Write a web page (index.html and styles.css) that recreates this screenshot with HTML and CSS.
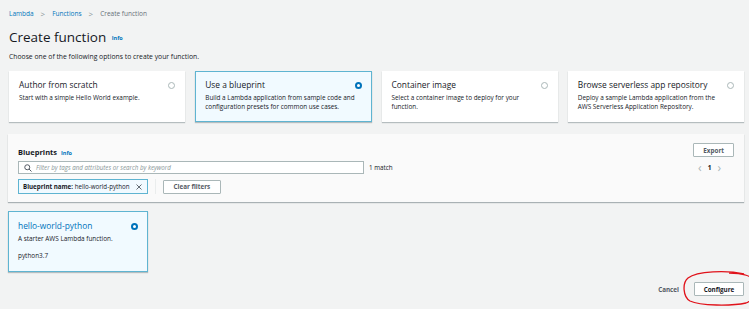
FILE: index.html
```html
<!DOCTYPE html>
<html>
<head lang="en">
    <meta charset="UTF-8">
    <title>Create function</title>
    <link rel="stylesheet" href="styles.css">
</head>
<body>
<div class="page">
    <div class="crumbs">
        <a href="#">Lambda</a>
        <span class="sep">&gt;</span>
        <a href="#">Functions</a>
        <span class="sep">&gt;</span>
        <span class="here">Create function</span>
    </div>
    <h1 class="title">Create function <span class="info">Info</span></h1>
    <p class="lead">Choose one of the following options to create your function.</p>

    <div class="tiles">
        <div class="tile">
            <div class="tile-head"><span>Author from scratch</span><i class="radio"></i></div>
            <p>Start with a simple Hello World example.</p>
        </div>
        <div class="tile on">
            <div class="tile-head"><span>Use a blueprint</span><i class="radio"></i></div>
            <p>Build a Lambda application from sample code and configuration presets for common use cases.</p>
        </div>
        <div class="tile">
            <div class="tile-head"><span>Container image</span><i class="radio"></i></div>
            <p>Select a container image to deploy for your function.</p>
        </div>
        <div class="tile">
            <div class="tile-head"><span>Browse serverless app repository</span><i class="radio"></i></div>
            <p>Deploy a sample Lambda application from the AWS Serverless Application Repository.</p>
        </div>
    </div>

    <div class="panel">
        <div class="panel-top">
            <h2>Blueprints <span class="info">Info</span></h2>
            <button class="btn">Export</button>
        </div>
        <div class="search-row">
            <div class="search">
                <svg width="8" height="8" viewBox="0 0 16 16"><circle cx="6.5" cy="6.5" r="5" fill="none" stroke="#545b64" stroke-width="2"/><path d="M10 10l5 5" stroke="#545b64" stroke-width="2"/></svg>
                <span>Filter by tags and attributes or search by keyword</span>
            </div>
            <span class="count">1 match</span>
            <div class="pager">
                <span class="chev">&lsaquo;</span>
                <b>1</b>
                <span class="chev">&rsaquo;</span>
            </div>
        </div>
        <div class="filter-row">
            <div class="token"><b>Blueprint name:</b>&nbsp;hello-world-python
                <svg width="8" height="8" viewBox="0 0 16 16"><path d="M3 3l10 10M13 3L3 13" stroke="#545b64" stroke-width="1.8"/></svg>
            </div>
            <i class="divider"></i>
            <button class="btn">Clear filters</button>
        </div>
    </div>

    <div class="result">
        <div class="tile-head"><span>hello-world-python</span><i class="radio"></i></div>
        <p>A starter AWS Lambda function.</p>
        <p class="runtime">python3.7</p>
    </div>

    <div class="actions">
        <a href="#" class="cancel">Cancel</a>
        <button class="btn primary">Configure</button>
        <svg class="circle-mark" width="80" height="38" viewBox="0 0 80 38">
            <path d="M62 4 C45 0 15 1 6 8 C0 13 1 27 8 31 C18 36 50 36 64 33 C72 30 75 21 73 12 C71 6 60 3 47 3" fill="none" stroke="#e0131b" stroke-width="1.3"/>
        </svg>
    </div>
</div>
</body>
</html>
```
FILE: styles.css
```css
* {
    margin: 0;
    padding: 0;
    box-sizing: border-box;
}

body {
    background-color: #f2f3f3;
    font-family: "Open Sans", "Liberation Sans", sans-serif;
    color: #16191f;
    font-size: 7px;
}

a {
    color: #0073bb;
    text-decoration: none;
}

.page {
    width: 749px;
    height: 309px;
    overflow: hidden;
    padding: 10px 5px 0 9px;
}

.crumbs {
    display: flex;
    align-items: center;
    height: 8px;
    line-height: 8px;
    font-size: 6.5px;
}

.crumbs .sep {
    color: #879596;
    margin: 0 7px;
    font-size: 8px;
}

.crumbs .here {
    color: #687078;
}

.title {
    margin-top: 10px;
    font-size: 13.5px;
    line-height: 18px;
    font-weight: 400;
}

.info {
    color: #0073bb;
    font-size: 5.5px;
    font-weight: 700;
    margin-left: 2px;
    vertical-align: middle;
}

.lead {
    margin-top: 5px;
    line-height: 9px;
    font-size: 6.8px;
}

.tiles {
    display: grid;
    grid-template-columns: repeat(4, 1fr);
    gap: 10px;
    margin-top: 10px;
}

.tile, .result {
    background-color: #fff;
    height: 51px;
    padding: 7px 9px 0 9px;
    box-shadow: 0 1px 1px rgba(0, 28, 36, .25);
    border: 1px solid transparent;
}

.tile.on, .result {
    background-color: #f1faff;
    border-color: #5fb4d1;
}

.tile-head {
    display: flex;
    justify-content: space-between;
    align-items: center;
    font-size: 8.4px;
    line-height: 12px;
}

.tile p, .result p {
    margin-top: 2px;
    font-size: 6.4px;
    line-height: 9px;
    color: #16191f;
    padding-right: 6px;
}

.radio {
    width: 7px;
    height: 7px;
    border-radius: 50%;
    border: 1px solid #aab7b8;
    background-color: #fff;
    flex: none;
}

.on .radio, .result .radio {
    border: 2.2px solid #0073bb;
}

.panel {
    margin: 12px 0 0 -1px;
    background-color: #fafafa;
    box-shadow: 0 1px 1px rgba(0, 28, 36, .3);
    padding: 9px 9px 7px 10px;
    height: 68px;
}

.panel-top {
    display: flex;
    justify-content: space-between;
    align-items: center;
}

.panel h2 {
    font-size: 7.5px;
    font-weight: 700;
    padding-top: 3px;
}

.btn {
    font-family: inherit;
    font-size: 6.3px;
    font-weight: 700;
    color: #545b64;
    background-color: #fff;
    border: 1px solid #aab7b8;
    height: 14px;
    padding: 0 9px;
    border-radius: 1px;
}

.panel-top .btn {
    margin-right: 1px;
}

.search-row {
    display: flex;
    align-items: center;
    margin-top: 4px;
}

.search {
    width: 346px;
    height: 13px;
    background-color: #fff;
    border: 1px solid #aab7b8;
    display: flex;
    align-items: center;
    padding-left: 5px;
    gap: 4px;
}

.search span {
    font-style: italic;
    color: #879596;
    font-size: 6.2px;
}

.count {
    margin-left: 5px;
    font-size: 6.3px;
}

.pager {
    margin-left: auto;
    margin-right: 14px;
    display: flex;
    align-items: center;
    gap: 6px;
    font-size: 6.5px;
}

.pager .chev {
    color: #aab7b8;
    font-size: 12px;
    line-height: 10px;
}

.filter-row {
    display: flex;
    align-items: center;
    margin-top: 5px;
}

.token {
    display: flex;
    align-items: center;
    height: 15px;
    padding: 0 4px 0 4px;
    background-color: #f1faff;
    border: 1px solid #5fb4d1;
    font-size: 6.2px;
}

.token svg {
    margin-left: 5px;
}

.divider {
    width: 1px;
    height: 15px;
    background-color: #eaeded;
    margin: 0 7px 0 7px;
}

.filter-row .btn {
    height: 14px;
    padding: 0 10px;
}

.result {
    width: 140px;
    height: 61px;
    margin: 9px 0 0 -1px;
    padding-top: 8px;
}

.result .tile-head {
    color: #0073bb;
}

.result .runtime {
    margin-top: 8px;
}

.actions {
    position: relative;
    display: flex;
    justify-content: flex-end;
    align-items: center;
    margin-top: 10px;
    gap: 15px;
}

.cancel {
    color: #545b64;
    font-weight: 700;
    font-size: 6.3px;
}

.actions .btn {
    width: 50px;
    padding: 0;
    color: #16191f;
}

.circle-mark {
    position: absolute;
    left: 673px;
    top: -12px;
}
```
